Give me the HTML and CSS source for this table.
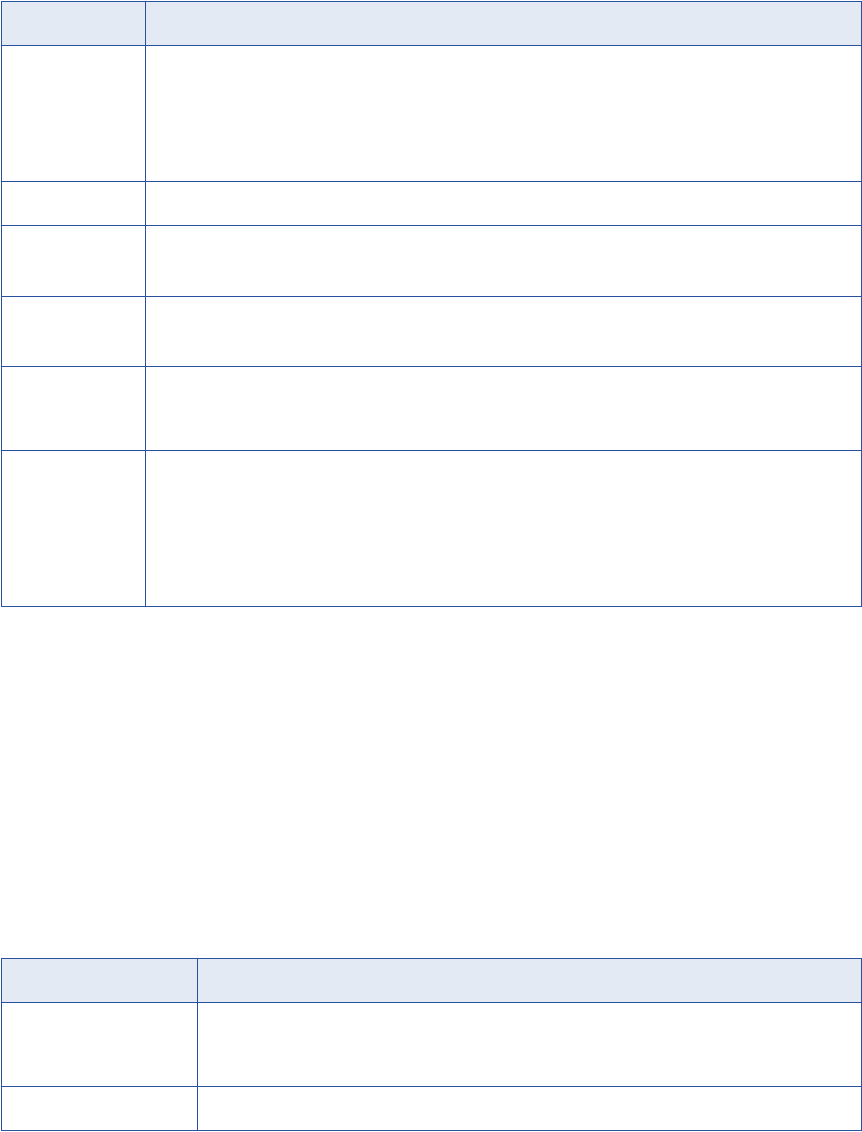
FILE: index.html
```html
<!DOCTYPE html>
<html lang="en">
<head>
  <meta charset="UTF-8" />
  <meta name="viewport" content="width=device-width, initial-scale=1.0" />
  <title>Tables</title>
  <link rel="stylesheet" href="styles.css">
</head>
<body>
  <table class="grid grid-first">
    <colgroup>
      <col class="col-name">
      <col>
    </colgroup>
    <thead>
      <tr class="row-head"><th></th><th></th></tr>
    </thead>
    <tbody>
      <tr class="row-135"><td></td><td></td></tr>
      <tr class="row-43"><td></td><td></td></tr>
      <tr class="row-70"><td></td><td></td></tr>
      <tr class="row-69"><td></td><td></td></tr>
      <tr class="row-83"><td></td><td></td></tr>
      <tr class="row-155"><td></td><td></td></tr>
    </tbody>
  </table>

  <table class="grid grid-second">
    <colgroup>
      <col class="col-wide">
      <col>
    </colgroup>
    <thead>
      <tr class="row-head"><th></th><th></th></tr>
    </thead>
    <tbody>
      <tr class="row-83"><td></td><td></td></tr>
      <tr class="row-43"><td></td><td></td></tr>
    </tbody>
  </table>
</body>
</html>
```

FILE: styles.css
```css
body {
  margin: 0;
  padding: 0;
  background: #fff;
  font-family: 'Liberation Sans', Arial, sans-serif;
  font-size: 14px;
  color: #222;
}

.grid {
  border-collapse: collapse;
  table-layout: fixed;
  width: 861px;
  margin-left: 1px;
}

.grid th,
.grid td {
  border: 1px solid #2a50a0;
  padding: 0;
}

.grid th {
  background: #e4eaf4;
}

.grid-first {
  margin-top: 1px;
}

.grid-second {
  margin-top: 351px;
}

.col-name {
  width: 144px;
}

.col-wide {
  width: 196px;
}

.row-head th { height: 43px; }
.row-135 td { height: 135px; }
.row-43 td { height: 43px; }
.row-70 td { height: 70px; }
.row-69 td { height: 69px; }
.row-83 td { height: 83px; }
.row-155 td { height: 155px; }
```
